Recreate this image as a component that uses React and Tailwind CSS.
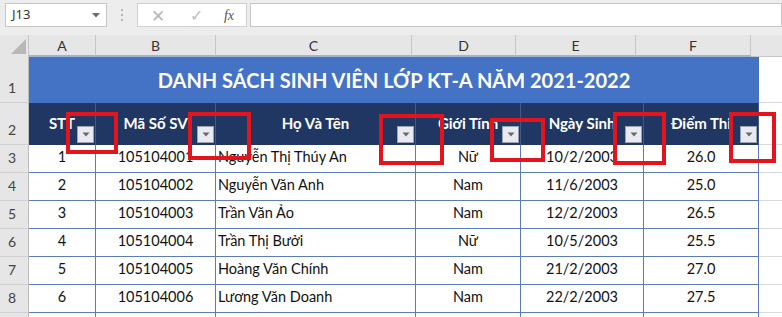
import React from 'react';

const dataCols = [67, 120, 200, 105, 123, 115];
const letterCols = [67, 120, 196, 104, 120, 115];
const letters = ['A', 'B', 'C', 'D', 'E', 'F'];
const headers = ['STT', 'Mã Số SV', 'Họ Và Tên', 'Giới Tính', 'Ngày Sinh', 'Điểm Thi'];

const rows = [
  ['1', '105104001', 'Nguyễn Thị Thúy An', 'Nữ', '10/2/2003', '26.0'],
  ['2', '105104002', 'Nguyễn Văn Anh', 'Nam', '11/6/2003', '25.0'],
  ['3', '105104003', 'Trần Văn Ảo', 'Nam', '12/2/2003', '26.5'],
  ['4', '105104004', 'Trần Thị Bưởi', 'Nữ', '10/5/2003', '25.5'],
  ['5', '105104005', 'Hoàng Văn Chính', 'Nam', '21/2/2003', '27.0'],
  ['6', '105104006', 'Lương Văn Doanh', 'Nam', '22/2/2003', '27.5'],
];

// red annotation boxes, page coords
const marks = [
  [66, 112, 52, 42],
  [188, 112, 63, 48],
  [379, 114, 65, 51],
  [490, 118, 55, 44],
  [613, 112, 53, 53],
  [729, 112, 47, 51],
];

function RowNum({ n, h }) {
  return (
    <div
      className="w-[29px] shrink-0 bg-[#e6e6e6] border-r border-b border-r-[#bdbdbd] border-b-[#d0d0d0] flex items-end pl-[8px] pb-[4px] text-[14px] text-[#444]"
      style={{ height: h }}
    >
      {n}
    </div>
  );
}

function FilterBtn() {
  return (
    <div className="absolute right-[1px] bottom-[2px] w-[17px] h-[17px] bg-[#e8eaef] border border-[#9aa3b3] flex items-center justify-center">
      <svg width="8" height="5" viewBox="0 0 8 5">
        <path d="M0.5 0.5 L7.5 0.5 L4 4.5 Z" fill="#6a6a6a" />
      </svg>
    </div>
  );
}

export default function App() {
  return (
    <div
      className="relative w-[782px] h-[317px] overflow-hidden bg-white"
      style={{ fontFamily: 'Lato, "Open Sans", sans-serif' }}
    >
      {/* formula bar */}
      <div className="h-[35px] bg-[#ededed] flex items-start pt-[3px]">
        <div className="ml-[5px] w-[102px] h-[24px] bg-white border border-[#c6c6c6] flex items-center justify-between pl-[6px] pr-[6px] text-[13px] text-[#333]" style={{ fontFamily: '"Noto Sans", sans-serif' }}>
          <span>J13</span>
          <svg width="8" height="5" viewBox="0 0 8 5">
            <path d="M0 0 L8 0 L4 4.5 Z" fill="#6b6b6b" />
          </svg>
        </div>
        <div className="w-[30px] h-[24px] flex flex-col items-center justify-center gap-[3px]">
          <div className="w-[2px] h-[2px] bg-[#b5b5b5]" />
          <div className="w-[2px] h-[2px] bg-[#b5b5b5]" />
          <div className="w-[2px] h-[2px] bg-[#b5b5b5]" />
        </div>
        <div className="w-[110px] h-[24px] bg-white border border-[#d0d0d0] flex items-center">
          <span className="w-[40px] text-center text-[#b8b8b8] text-[17px] leading-none">✕</span>
          <span className="w-[36px] text-center text-[#bdbdbd] text-[16px] leading-none">✓</span>
          <span className="w-[30px] text-center text-[#555] text-[14px] italic" style={{ fontFamily: '"Liberation Serif", serif' }}>fx</span>
        </div>
        <div className="ml-[3px] flex-1 h-[24px] bg-white border border-[#c6c6c6]" />
      </div>

      {/* column letters */}
      <div className="flex h-[22px] bg-[#e6e6e6]">
        <div className="w-[29px] shrink-0 border-r border-[#c6c6c6] relative">
          <svg className="absolute left-[11px] top-[4px]" width="15" height="15" viewBox="0 0 15 15">
            <path d="M15 0 L15 15 L0 15 Z" fill="#b8b8b8" />
          </svg>
        </div>
        {letters.map((l, i) => (
          <div
            key={l}
            className="shrink-0 border-r border-[#c6c6c6] border-b-2 border-b-[#9db4d8] flex items-center justify-center text-[14px] text-[#333]"
            style={{ width: letterCols[i] }}
          >
            {l}
          </div>
        ))}
        <div className="flex-1 border-b border-[#c6c6c6]" />
      </div>

      {/* row 1 title */}
      <div className="flex">
        <RowNum n="1" h={46} />
        <div className="w-[730px] h-[46px] bg-[#4472c4] flex items-center justify-center text-white font-bold text-[20px]">
          DANH SÁCH SINH VIÊN LỚP KT-A NĂM 2021-2022
        </div>
        <div className="flex-1 h-[46px] border-b border-[#d9d9d9]" />
      </div>

      {/* row 2 headers */}
      <div className="flex">
        <RowNum n="2" h={42} />
        {headers.map((h, i) => (
          <div
            key={h}
            className="relative shrink-0 h-[42px] bg-[#203764] border-r border-[#41598a] flex items-center justify-center pb-[2px] text-white font-bold text-[15px] whitespace-nowrap overflow-hidden"
            style={{ width: dataCols[i] }}
          >
            {h}
            <FilterBtn />
          </div>
        ))}
        <div className="flex-1 h-[42px] border-b border-[#d9d9d9]" />
      </div>

      {/* data rows */}
      {rows.map((r, ri) => (
        <div key={ri} className="flex">
          <RowNum n={String(ri + 3)} h={28} />
          {r.map((v, ci) => (
            <div
              key={ci}
              className={
                'shrink-0 h-[28px] border-r border-b border-[#5b7cba] flex items-end pb-[4px] text-[14.5px] text-[#111] whitespace-nowrap ' +
                (ci === 2 ? 'justify-start pl-[2px]' : 'justify-center')
              }
              style={{ width: dataCols[ci] }}
            >
              {v}
            </div>
          ))}
          <div className="flex-1 h-[28px] border-b border-[#d9d9d9]" />
        </div>
      ))}
      <div className="flex">
        <div className="w-[29px] shrink-0 h-[28px] bg-[#e6e6e6] border-r border-[#bdbdbd]" />
        {dataCols.map((w, ci) => (
          <div key={ci} className="shrink-0 h-[28px] border-r border-[#5b7cba]" style={{ width: w }} />
        ))}
      </div>

      {/* red annotations */}
      {marks.map(([x, y, w, h], i) => (
        <div
          key={i}
          className="absolute border-[4px] border-[#e3141b]"
          style={{ left: x, top: y, width: w, height: h }}
        />
      ))}
    </div>
  );
}
